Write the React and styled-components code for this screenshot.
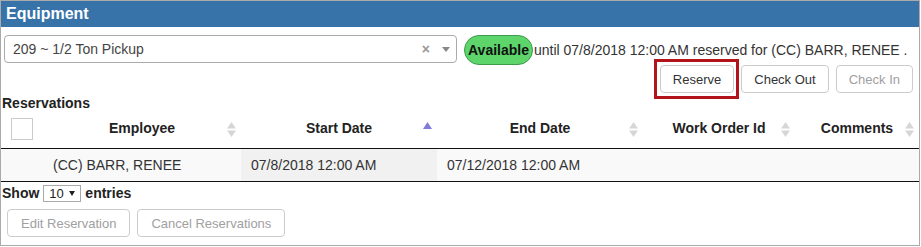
import React from "react";
import styled, { createGlobalStyle } from "styled-components";

const Global = createGlobalStyle`
  html, body { margin: 0; padding: 0; background: #fff; }
  body { font-family: "Liberation Sans", Arial, sans-serif; font-size: 14px; color: #333; }
  * { box-sizing: border-box; }
`;

const Panel = styled.div`
  width: 920px;
  height: 246px;
  border: 1px solid #aaa;
  background: #fff;
`;

const PanelHeader = styled.div`
  height: 26px;
  line-height: 26px;
  padding-left: 5px;
  background: #3773a9;
  color: #fff;
  font-weight: bold;
  font-size: 16px;
`;

const TopRow = styled.div`
  display: flex;
  align-items: flex-start;
  padding: 8px 6px 0 3px;
  height: 38px;
`;

const SelectBox = styled.div`
  width: 453px;
  height: 28px;
  border: 1px solid #aaa;
  border-radius: 4px;
  display: flex;
  align-items: center;
  padding-left: 8px;
  margin-right: 7px;
  color: #444;
  font-size: 14px;
`;

const SelectText = styled.span`
  flex: 1;
`;

const ClearMark = styled.span`
  color: #999;
  font-weight: bold;
  font-size: 14px;
  margin-right: 6px;
`;

const ArrowBox = styled.span`
  width: 20px;
  height: 26px;
  display: flex;
  align-items: center;
  justify-content: center;
`;

const Caret = styled.span`
  width: 0;
  height: 0;
  border-style: solid;
  border-width: ${(p) => (p.$small ? "5px 3px 0 3px" : "5px 4px 0 4px")};
  border-color: ${(p) => p.$color || "#888"} transparent transparent transparent;
`;

const Badge = styled.span`
  height: 30px;
  line-height: 28px;
  padding: 0 3px;
  border: 1px solid #3f9a4b;
  border-radius: 15px;
  background: #5dd56a;
  color: #111;
  font-weight: bold;
  font-size: 14px;
`;

const StatusText = styled.span`
  line-height: 30px;
  margin-left: 1px;
  color: #333;
  white-space: nowrap;
`;

const ActionsRow = styled.div`
  display: flex;
  justify-content: flex-end;
  gap: 7px;
  padding-right: 6px;
`;

const Button = styled.button`
  position: relative;
  height: 28px;
  padding: 0 ${(p) => (p.$wide ? "13px" : "12px")};
  border: 1px solid #ccc;
  border-radius: 4px;
  background: #fff;
  font-family: "Liberation Sans", Arial, sans-serif;
  font-size: 13px;
  color: ${(p) => (p.disabled ? "#a0a0a0" : "#333")};
  cursor: default;

  &::after {
    content: "";
    display: ${(p) => (p.$highlight ? "block" : "none")};
    position: absolute;
    inset: -7px -6px -7px -7px;
    border: 3px solid #b3141b;
    pointer-events: none;
  }
`;

const SectionLabel = styled.div`
  font-weight: bold;
  font-size: 14px;
  line-height: 20px;
  padding-left: 1px;
  color: #222;
`;

const Table = styled.table`
  width: 918px;
  table-layout: fixed;
  border-collapse: separate;
  border-spacing: 0;
`;

const Th = styled.th`
  padding: 5px 5px 10px;
  vertical-align: top;
  border-bottom: 1px solid #111;
  font-weight: bold;
  font-size: 14px;
  line-height: 20px;
  color: #222;
`;

const CheckTh = styled(Th)`
  padding: 5px 10px 8px;
`;

const HeadCell = styled.div`
  display: grid;
  grid-template-columns: 1fr auto 1fr;
  align-items: start;
`;

const HeadText = styled.span`
  grid-column: 2;
  white-space: nowrap;
`;

const SortSlot = styled.span`
  grid-column: 3;
  justify-self: end;
  margin-top: 4px;
  display: flex;
`;

const CheckSquare = styled.div`
  width: 22px;
  height: 22px;
  border: 1px solid #ccc;
  background: #fff;
`;

const Tr = styled.tr`
  background: #f9f9f9;
`;

const Td = styled.td`
  padding: 6px 10px;
  line-height: 20px;
  font-size: 14px;
  color: #333;
  border-bottom: 1px solid #111;
  white-space: nowrap;
  background: ${(p) => (p.$sorted ? "#f1f1f1" : "transparent")};
`;

const ShowRow = styled.div`
  display: flex;
  align-items: center;
  gap: 4px;
  height: 18px;
  margin-top: 2px;
  padding-left: 1px;
  font-weight: bold;
  font-size: 14px;
  color: #222;
`;

const LengthSelect = styled.span`
  display: inline-flex;
  align-items: center;
  justify-content: space-between;
  width: 38px;
  height: 17px;
  padding: 0 5px;
  border: 1px solid #a9a9a9;
  font-weight: normal;
  font-size: 13px;
  color: #222;
`;

const FooterRow = styled.div`
  display: flex;
  gap: 7px;
  padding: 7px 0 0 6px;
`;

function SortIcon({ state }) {
  if (state === "asc") {
    return (
      <svg width="9" height="15" viewBox="0 0 9 15">
        <polygon points="4.5,0 9,7 0,7" fill="#7f7cd9" />
      </svg>
    );
  }
  return (
    <svg width="9" height="15" viewBox="0 0 9 15">
      <polygon points="4.5,0 9,6.5 0,6.5" fill="#d6d6d6" />
      <polygon points="0,8.5 9,8.5 4.5,15" fill="#d6d6d6" />
    </svg>
  );
}

const columns = [
  { key: "employee", label: "Employee", width: 198 },
  { key: "start", label: "Start Date", width: 196, sort: "asc" },
  { key: "end", label: "End Date", width: 206 },
  { key: "wo", label: "Work Order Id", width: 152 },
  { key: "comments", label: "Comments", width: 124 },
];

const rows = [
  {
    employee: "(CC) BARR, RENEE",
    start: "07/8/2018 12:00 AM",
    end: "07/12/2018 12:00 AM",
    wo: "",
    comments: "",
  },
];

export default function App() {
  return (
    <>
      <Global />
      <Panel>
        <PanelHeader>Equipment</PanelHeader>
        <TopRow>
          <SelectBox>
            <SelectText>209 ~ 1/2 Ton Pickup</SelectText>
            <ClearMark>×</ClearMark>
            <ArrowBox>
              <Caret />
            </ArrowBox>
          </SelectBox>
          <Badge>Available</Badge>
          <StatusText>until 07/8/2018 12:00 AM reserved for (CC) BARR, RENEE .</StatusText>
        </TopRow>
        <ActionsRow>
          <Button $highlight>Reserve</Button>
          <Button>Check Out</Button>
          <Button disabled>Check In</Button>
        </ActionsRow>
        <SectionLabel>Reservations</SectionLabel>
        <Table>
          <colgroup>
            <col style={{ width: 42 }} />
            {columns.map((c) => (
              <col key={c.key} style={{ width: c.width }} />
            ))}
          </colgroup>
          <thead>
            <tr>
              <CheckTh>
                <CheckSquare />
              </CheckTh>
              {columns.map((c) => (
                <Th key={c.key}>
                  <HeadCell>
                    <HeadText>{c.label}</HeadText>
                    <SortSlot>
                      <SortIcon state={c.sort} />
                    </SortSlot>
                  </HeadCell>
                </Th>
              ))}
            </tr>
          </thead>
          <tbody>
            {rows.map((r, i) => (
              <Tr key={i}>
                <Td />
                {columns.map((c) => (
                  <Td key={c.key} $sorted={c.sort === "asc"}>
                    {r[c.key]}
                  </Td>
                ))}
              </Tr>
            ))}
          </tbody>
        </Table>
        <ShowRow>
          Show
          <LengthSelect>
            10
            <Caret $small $color="#222" />
          </LengthSelect>
          entries
        </ShowRow>
        <FooterRow>
          <Button $wide disabled>Edit Reservation</Button>
          <Button $wide disabled>Cancel Reservations</Button>
        </FooterRow>
      </Panel>
    </>
  );
}
